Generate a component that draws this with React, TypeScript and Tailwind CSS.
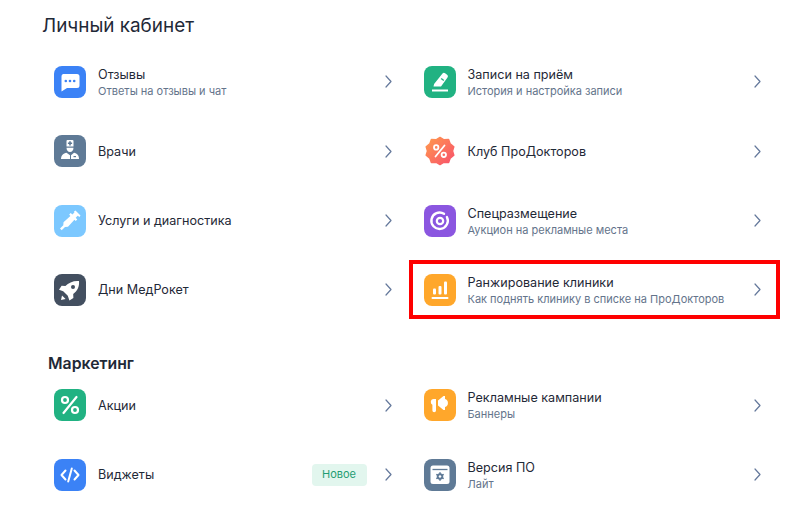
import { FC, ReactNode } from "react";

interface RowProps {
  title: string;
  subtitle?: string;
  icon: ReactNode;
  badge?: string;
  highlighted?: boolean;
}

const Tile: FC<{ color: string; children: ReactNode }> = ({ color, children }) => (
  <div className={`w-8 h-8 rounded-lg shrink-0 ${color}`}>
    <svg viewBox="0 0 32 32" className="w-8 h-8" fill="#fff">
      {children}
    </svg>
  </div>
);

const ChatIcon = (
  <Tile color="bg-[#3b82f6]">
    <path d="M9 8h14a2.500 2.500 0 0 1 2.500 2.500v9A2.500 2.500 0 0 1 23 22H13l-5.500 3.500v-15A2.500 2.500 0 0 1 9 8z" />
    <circle cx="11.800" cy="15" r="1.300" fill="#3b82f6" />
    <circle cx="16" cy="15" r="1.300" fill="#3b82f6" />
    <circle cx="20.200" cy="15" r="1.300" fill="#3b82f6" />
  </Tile>
);

const DoctorIcon = (
  <Tile color="bg-[#5f7a96]">
    <path d="M12.500 6a1 1 0 0 1 1-1h5a1 1 0 0 1 1 1v5.500h-7z" />
    <path d="M15.200 6.300h1.600v1.300h1.300v1.500h-1.300v1.300h-1.600V9.100h-1.300V7.600h1.300z" fill="#5f7a96" />
    <path d="M12.500 12.800h7c0 2.600-1.400 4.200-3.500 4.200s-3.500-1.600-3.500-4.200z" />
    <path d="M7 24c0-3.400 2.400-5.800 5.500-6.200l3.500 2.400V24z" />
    <path d="M17 20.200l3-2.400c3 .4 5 2.800 5 6.200h-8z" />
    <path d="M19.500 21h2.500v1.200h-2.500z" fill="#5f7a96" />
  </Tile>
);

const SyringeIcon = (
  <Tile color="bg-[#7cc8ff]">
    <path d="M20 6.500l1.500-1 5 5-1 1.500-1.800-1.200-2 2 1.600 1.700-1.600 1.500-1.300-1.200-6.400 6.900-3 .2-3.300 3.300-1.700-1.600 3.300-3.300.2-3 6.900-6.400-1.200-1.300 1.500-1.600 1.700 1.600 2-2z" />
  </Tile>
);

const RocketIcon = (
  <Tile color="bg-[#434f60]">
    <path d="M25 7c.5 5.500-1.600 10-5.800 13l.2 4-4 2.400-1.600-4.600-4.600-4.600-4.200-1.400 2.600-4 3.800.3C14.600 8.600 19.500 6.500 25 7z" />
    <circle cx="19" cy="13" r="2" fill="#434f60" />
    <path d="M7 26l1-4.500 3.600 3.600z" />
  </Tile>
);

const PenIcon = (
  <Tile color="bg-[#21b282]">
    <path d="M18.500 7.500a2 2 0 0 1 2.600-.2l2 1.500a2 2 0 0 1 .4 2.800L17 20.500H9.500l.6-2.500z" />
    <path d="M8 23.500h16v2H8z" />
    <path d="M17.200 12.500l2.600 2" stroke="#21b282" strokeWidth="1.400" fill="none" />
  </Tile>
);

const ClubIcon = (
  <div className="w-8 h-8 shrink-0">
    <svg viewBox="0 0 32 32" className="w-8 h-8">
      <defs>
        <linearGradient id="club" x1="0" y1="0" x2="1" y2="1">
          <stop offset="0" stopColor="#ff9a4d" />
          <stop offset="1" stopColor="#f8506c" />
        </linearGradient>
      </defs>
      <path
        d="M16 2.500l4 2.300 4.600-.2 1.600 4.300 3.600 2.900-1.300 4.200 1.300 4.200-3.600 2.900-1.600 4.300-4.600-.2-4 2.300-4-2.300-4.600.2-1.600-4.300-3.600-2.900 1.300-4.200-1.300-4.200 3.600-2.900 1.600-4.300 4.600.2z"
        fill="url(#club)"
        strokeLinejoin="round"
        stroke="url(#club)"
        strokeWidth="1.500"
      />
      <circle cx="12.200" cy="12.400" r="2.200" fill="none" stroke="#fff" strokeWidth="1.800" />
      <circle cx="19.800" cy="19.800" r="2.200" fill="none" stroke="#fff" strokeWidth="1.800" />
      <path d="M20.500 10.500L11.500 21.500" stroke="#fff" strokeWidth="1.800" strokeLinecap="round" />
    </svg>
  </div>
);

const TargetIcon = (
  <Tile color="bg-[#8b56e0]">
    <path
      d="M22.900 12a8.200 8.200 0 1 1-2.900-3.200"
      fill="none"
      stroke="#fff"
      strokeWidth="2.400"
      strokeLinecap="round"
    />
    <circle cx="16" cy="16" r="3.200" fill="none" stroke="#fff" strokeWidth="2.200" />
  </Tile>
);

const BarsIcon = (
  <Tile color="bg-[#ffa72b]">
    <rect x="9" y="14.500" width="3" height="6" rx="1" />
    <rect x="14.500" y="12" width="3" height="8.500" rx="1" />
    <rect x="20" y="7.500" width="3" height="13" rx="1" />
    <rect x="7.500" y="23" width="17" height="2" rx="1" />
  </Tile>
);

const PercentIcon = (
  <Tile color="bg-[#21b282]">
    <circle cx="11" cy="11" r="3" fill="none" stroke="#fff" strokeWidth="2.200" />
    <circle cx="21" cy="21" r="3" fill="none" stroke="#fff" strokeWidth="2.200" />
    <path d="M22.500 8L9.500 24" stroke="#fff" strokeWidth="2.200" strokeLinecap="round" />
  </Tile>
);

const CodeIcon = (
  <Tile color="bg-[#3b82f6]">
    <path
      d="M11.500 11.500L7.500 16l4 4.500M20.500 11.500l4 4.500-4 4.500M17.800 9.500l-3.600 13"
      fill="none"
      stroke="#fff"
      strokeWidth="2"
      strokeLinecap="round"
      strokeLinejoin="round"
    />
  </Tile>
);

const MegaphoneIcon = (
  <Tile color="bg-[#ffa72b]">
    <path d="M10 10h2v11.500a1.800 1.800 0 0 1-3.600 0v-5.700A3.200 3.200 0 0 1 6.800 13 3.100 3.100 0 0 1 10 10z" />
    <path d="M14 11.500l5.500-4.500h1.500v3a4.200 4.200 0 0 1 0 8v3h-1.500L14 16.500z" />
  </Tile>
);

const VersionIcon = (
  <Tile color="bg-[#5f7a96]">
    <rect x="6.500" y="6.500" width="19" height="18.500" rx="2.500" />
    <path d="M8.500 10.500h15" stroke="#5f7a96" strokeWidth="1.300" />
    <circle cx="16" cy="17.500" r="3.200" fill="#5f7a96" />
    <circle cx="16" cy="17.500" r="1.200" fill="#fff" />
    <path d="M16 13.200v8.600M12.300 15.300l7.400 4.400M12.300 19.700l7.400-4.400" stroke="#5f7a96" strokeWidth="1.500" />
    <circle cx="16" cy="17.500" r="1.200" fill="#fff" />
  </Tile>
);

const Row: FC<RowProps> = ({ title, subtitle, icon, badge, highlighted }) => (
  <div className="relative flex items-center h-[69.33px] pl-3 pr-3.5">
    {icon}
    <div className="ml-3 flex-1 min-w-0">
      <div className="text-[12.6px] leading-[19px] text-[#1f2937]">{title}</div>
      {subtitle && (
        <div className="text-[11px] leading-[15px] text-[#64748b]">{subtitle}</div>
      )}
    </div>
    {badge && (
      <div className="mr-[18px] h-[22px] px-[10.5px] flex items-center rounded bg-[#e2f6ee] text-[11px] text-[#1f9d72]">
        {badge}
      </div>
    )}
    <svg viewBox="0 0 7 13" className="w-[7px] h-[13px] mr-[0.5px] shrink-0" fill="none">
      <path
        d="M1 1l5 5.500-5 5.500"
        stroke="#64789b"
        strokeWidth="1.200"
        strokeLinecap="round"
        strokeLinejoin="round"
      />
    </svg>
    {highlighted && (
      <div className="absolute left-[-2.500px] right-[-4.500px] top-[5px] bottom-[6px] border-4 border-[#fe0000]" />
    )}
  </div>
);

export default function App() {
  return (
    <div className="w-[800px] h-[516px] overflow-hidden bg-white pl-[42px] pt-[14px] font-['Inter',sans-serif]">
      <h1 className="text-[18.9px] leading-[24px] text-[#1f2937]">Личный кабинет</h1>
      <div className="mt-[9.3px] grid grid-cols-[364px_364px] gap-x-[5.5px]">
        <Row title="Отзывы" subtitle="Ответы на отзывы и чат" icon={ChatIcon} />
        <Row title="Записи на приём" subtitle="История и настройка записи" icon={PenIcon} />
        <Row title="Врачи" icon={DoctorIcon} />
        <Row title="Клуб ПроДокторов" icon={ClubIcon} />
        <Row title="Услуги и диагностика" icon={SyringeIcon} />
        <Row title="Спецразмещение" subtitle="Аукцион на рекламные места" icon={TargetIcon} />
        <Row title="Дни МедРокет" icon={RocketIcon} />
        <Row
          title="Ранжирование клиники"
          subtitle="Как поднять клинику в списке на ПроДокторов"
          icon={BarsIcon}
          highlighted
        />
      </div>
      <h2 className="mt-[27px] ml-[6px] text-[15.8px] leading-[24px] font-semibold text-[#1f2937]">
        Маркетинг
      </h2>
      <div className="mt-[-5px] grid grid-cols-[364px_364px] gap-x-[5.5px]">
        <Row title="Акции" icon={PercentIcon} />
        <Row title="Рекламные кампании" subtitle="Баннеры" icon={MegaphoneIcon} />
        <Row title="Виджеты" icon={CodeIcon} badge="Новое" />
        <Row title="Версия ПО" subtitle="Лайт" icon={VersionIcon} />
      </div>
    </div>
  );
}
